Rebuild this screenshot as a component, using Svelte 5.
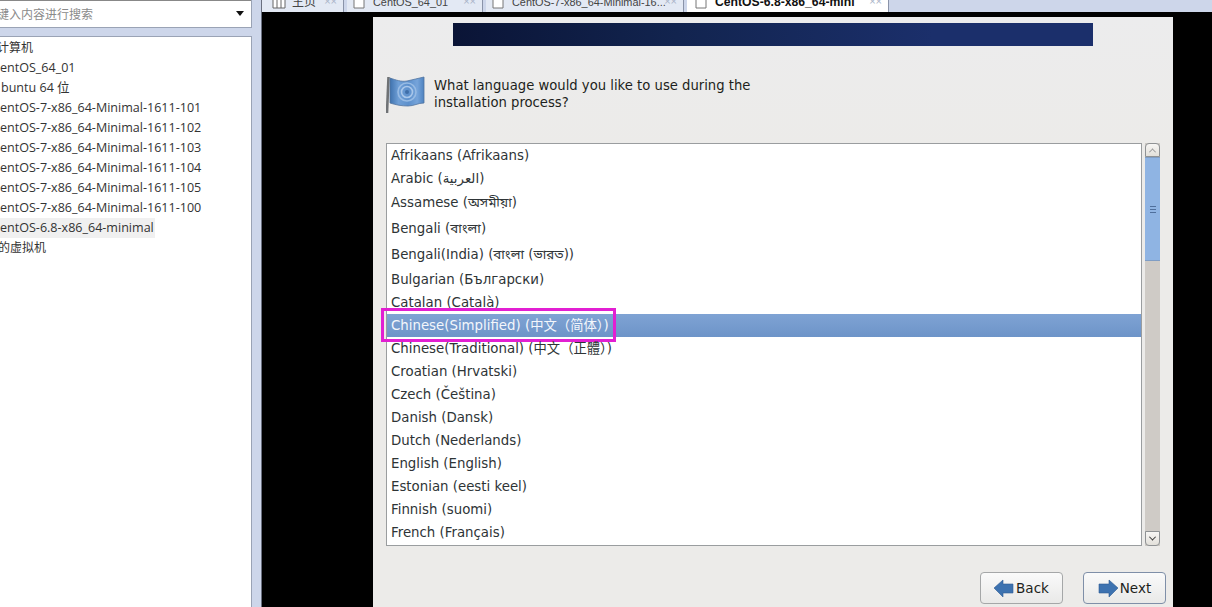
<script>
  const machines = [
    ['计算机', false],
    ['entOS_64_01', false],
    ['buntu 64 位', false],
    ['entOS-7-x86_64-Minimal-1611-101', false],
    ['entOS-7-x86_64-Minimal-1611-102', false],
    ['entOS-7-x86_64-Minimal-1611-103', false],
    ['entOS-7-x86_64-Minimal-1611-104', false],
    ['entOS-7-x86_64-Minimal-1611-105', false],
    ['entOS-7-x86_64-Minimal-1611-100', false],
    ['entOS-6.8-x86_64-minimal', true],
    ['的虚拟机', false]
  ];
  const languages = [
    ['Afrikaans (Afrikaans)', 'r23'],
    ['Arabic (العربية)', 'r23'],
    ['Assamese (অসমীয়া)', 'r24 low1'],
    ['Bengali (বাংলা)', 'r26 low2'],
    ['Bengali(India) (বাংলা (ভারত))', 'r26 low2'],
    ['Bulgarian (Български)', 'r25'],
    ['Catalan (Català)', 'r23'],
    ['Chinese(Simplified) (中文（简体）)', 'r23 cjk selected'],
    ['Chinese(Traditional) (中文（正體）)', 'r23 cjk'],
    ['Croatian (Hrvatski)', 'r23'],
    ['Czech (Čeština)', 'r23'],
    ['Danish (Dansk)', 'r23'],
    ['Dutch (Nederlands)', 'r23'],
    ['English (English)', 'r23'],
    ['Estonian (eesti keel)', 'r23'],
    ['Finnish (suomi)', 'r23'],
    ['French (Français)', 'r23']
  ];
  const tabs = [
    { label: '主页', cls: 'home' },
    { label: 'CentOS_64_01', cls: 'second' },
    { label: 'CentOS-7-x86_64-Minimal-16...', cls: 'third' },
    { label: 'CentOS-6.8-x86_64-mini', cls: 'active' }
  ];
</script>

<div class="root">
  <aside class="side">
    <div class="search">
      <span class="hint">键入内容进行搜索</span>
      <span class="caret"></span>
    </div>
    <ul class="tree">
      {#each machines as [name, current]}
        <li class="machine"><span class:current>{name}</span></li>
      {/each}
    </ul>
  </aside>

  <main class="main">
    <div class="tabs">
      {#each tabs as t}
        <div class="tab {t.cls}">
          <svg class="tabicon" width="16" height="24" viewBox="0 0 16 24" aria-hidden="true">
            {#if t.cls === 'home'}
              <path d="M1 4h12v16H1zM5 4v16M9 4v16" fill="#fff" stroke="#666" />
            {:else}
              <path d="M1 4h10v16H1z" fill="#fff" stroke="#777" />
              <path d="M8 4h6v7" fill="none" stroke="#777" />
              {#if t.cls === 'active'}<path d="M11 1l5 5-5 5z" fill="#3fae2a" />{/if}
            {/if}
          </svg>
          <span class="tablabel">{t.label}</span>
          <span class="close">××</span>
        </div>
      {/each}
    </div>

    <div class="stage">
      <div class="installer">
        <div class="banner"></div>
        <div class="question">
          <svg class="flag" width="40" height="40" viewBox="0 0 40 40" aria-hidden="true">
            <defs>
              <linearGradient id="fl" x1="0" y1="0" x2="1" y2="0">
                <stop offset="0" stop-color="#3f72ae" />
                <stop offset="0.25" stop-color="#6f9fd6" />
                <stop offset="0.55" stop-color="#5d90cc" />
                <stop offset="0.8" stop-color="#76a4da" />
                <stop offset="1" stop-color="#4d82c0" />
              </linearGradient>
            </defs>
            <path d="M2.5 2L1 38" stroke="#6f7275" stroke-width="2.6" />
            <path d="M4 3c6 2 11 4 17 3s11-3 17-4v26c-6 0-10 3-16 3s-12-1-18-3z" fill="url(#fl)" stroke="#52749f" stroke-width="0.8" />
            <circle cx="21" cy="17" r="9" fill="none" stroke="#97bbe4" stroke-width="1.6" />
            <circle cx="21" cy="17" r="5.5" fill="none" stroke="#a9c7ea" stroke-width="1.6" />
            <circle cx="21" cy="17" r="2" fill="#3f6ea8" />
          </svg>
          <p>What language would you like to use during the<br />installation process?</p>
        </div>

        <div class="listrow">
          <div class="list">
            {#each languages as [text, cls]}
              <div class="lang {cls}">
                <span>{text}</span>
                {#if cls.includes('selected')}<span class="highlight"></span>{/if}
              </div>
            {/each}
          </div>
          <div class="scrollbar">
            <div class="sbtn up"><span class="chev"></span></div>
            <div class="thumb"><span class="grip"></span></div>
            <div class="trough"></div>
            <div class="sbtn down"><span class="chev"></span></div>
          </div>
        </div>

        <div class="actions">
          <button class="btn">
            <svg width="20" height="20" viewBox="0 0 20 20" aria-hidden="true">
              <path d="M0 10L9 2v4h10v9H9v4z" fill="#3d72b0" stroke="#2f5c94" stroke-width="0.6" />
            </svg>
            Back
          </button>
          <button class="btn next">
            <svg width="20" height="20" viewBox="0 0 20 20" aria-hidden="true">
              <path d="M20 10L11 2v4H1v9h10v4z" fill="#3d72b0" stroke="#2f5c94" stroke-width="0.6" />
            </svg>
            Next
          </button>
        </div>
      </div>
    </div>
  </main>
</div>

<style>
  :global(body) {
    margin: 0;
    background: #cdd6ea;
  }
  .root {
    display: grid;
    grid-template-columns: 261px 1fr;
    width: 1212px;
    height: 607px;
    overflow: hidden;
    background: #cdd6ea;
  }
  .side {
    display: flex;
    flex-direction: column;
    gap: 8px;
    padding-right: 9px;
    min-width: 0;
    overflow: hidden;
    font-family: "Open Sans", "Noto Sans CJK SC", sans-serif;
    color: #333;
  }
  .search {
    height: 28px;
    box-sizing: border-box;
    display: flex;
    align-items: center;
    justify-content: space-between;
    padding: 0 7px 0 0;
    background: #fff;
    border: solid #9aa3b5;
    border-width: 0 1px 1px 0;
    font-size: 12px;
    color: #8a8a8a;
    box-shadow: inset 0 1px 0 #888;
  }
  .hint {
    margin-left: -3px;
  }
  .caret {
    width: 0;
    height: 0;
    border: 4px solid transparent;
    border-top: 5px solid #111;
    border-bottom: 0;
  }
  .tree {
    flex: 1;
    margin: 0;
    padding: 1px 0 0;
    list-style: none;
    background: #fff;
    border: solid #9aa3b5;
    border-width: 1px 1px 0 0;
    font-size: 12.55px;
  }
  .machine {
    height: 20px;
    line-height: 20px;
    white-space: nowrap;
  }
  .machine span {
    display: inline-block;
    padding-right: 1px;
  }
  .machine .current {
    background: #f0f0f0;
  }
  .machine:nth-child(3) span {
    margin-left: 1px;
  }
  .machine:last-child span {
    margin-left: -2px;
    font-size: 12px;
  }
  .machine:first-child span {
    margin-left: -3px;
    font-size: 12px;
  }
  .main {
    display: flex;
    flex-direction: column;
    min-width: 0;
    border-left: 1px solid #6a7080;
  }
  .tabs {
    height: 12px;
    display: flex;
    align-items: flex-end;
    gap: 3px;
    overflow: hidden;
    background: #cdd6ea;
    font-family: "Liberation Sans", "Noto Sans CJK SC", sans-serif;
    font-size: 10.9px;
    color: #444;
  }
  .tab {
    flex: none;
    height: 24px;
    box-sizing: border-box;
    display: flex;
    align-items: flex-start;
    gap: 2px;
    padding-left: 6px;
    background: #e3e9f4;
    border-right: 1px solid #8a93a8;
    white-space: nowrap;
    position: relative;
  }
  .home { width: 82px; padding-left: 10px; font-size: 12px; }
  .second { width: 136px; }
  .third { width: 198px; }
  .active { width: 202px; padding-left: 8px; background: #fff; font-size: 12.2px; font-weight: 700; color: #111; }
  .tabicon { flex: none; }
  .tablabel { margin-top: 6px; line-height: 16px; margin-left: 2px; }
  .close {
    position: absolute;
    right: 6px;
    top: 6px;
    color: #aab4c8;
    font-size: 11px;
    font-weight: 400;
    line-height: 14px;
  }
  .stage {
    flex: 1;
    min-height: 0;
    background: #000;
    padding: 5px 0 0 111px;
  }
  .installer {
    width: 800px;
    height: 590px;
    box-sizing: border-box;
    padding: 6px 13px 0;
    background: linear-gradient(180deg, #ececed 0, #ecebe9 130px);
    display: flex;
    flex-direction: column;
    font-family: "DejaVu Sans", "Noto Sans Bengali", "Noto Sans CJK SC", sans-serif;
    font-size: 13.33px;
    color: #2e3436;
  }
  .banner {
    align-self: center;
    width: 640px;
    height: 23px;
    background: linear-gradient(90deg, #0a1436 0%, #12244f 35%, #1b2f6b 75%, #1b2f6b 100%);
  }
  .question {
    display: flex;
    gap: 8px;
    align-items: flex-start;
    margin-top: 29px;
    height: 68px;
  }
  .question p {
    margin: 2px 0 0;
    font-size: 13.2px;
    line-height: 17px;
    color: #1d1f20;
    white-space: nowrap;
  }
  .flag {
    flex: none;
  }
  .listrow {
    display: flex;
    gap: 3px;
    height: 403px;
  }
  .list {
    width: 756px;
    box-sizing: border-box;
    background: #fff;
    border: 1px solid #9a9d9f;
    overflow: visible;
  }
  .lang {
    position: relative;
    box-sizing: border-box;
    display: flex;
    align-items: center;
    padding: 0 0 0 4px;
    white-space: nowrap;
  }
  .r23 { height: 23px; }
  .r25 { height: 25px; padding: 1px 0 0 4px; }
  .r24 { height: 24px; }
  .r26 { height: 26px; }
  .low1 { padding: 2px 0 0 4px; }
  .low2 { padding: 4px 0 0 4px; }
  .cjk { padding: 0 0 2px 4px; }
  .selected {
    background: linear-gradient(180deg, #7fa3d4, #6d94c8);
    color: #f3f6fb;
  }
  .highlight {
    position: absolute;
    left: -6px;
    top: -6px;
    width: 235px;
    height: 34px;
    box-sizing: border-box;
    border: 3px solid #e21fd2;
  }
  .scrollbar {
    width: 15px;
    display: flex;
    flex-direction: column;
    background: #cfcbc6;
  }
  .sbtn {
    height: 14px;
    flex: none;
    box-sizing: border-box;
    background: linear-gradient(180deg, #f7f6f4, #e3e0da);
    border: 1px solid #8f9294;
    display: flex;
    align-items: center;
    justify-content: center;
  }
  .up { border-radius: 4px 4px 0 0; }
  .down { border-radius: 0 0 4px 4px; height: 15px; }
  .chev {
    width: 4px;
    height: 4px;
    border: solid #333;
    border-width: 1.5px 0 0 1.5px;
    transform: rotate(45deg) translate(1px, 1px);
  }
  .up .chev { border-color: #999; }
  .down .chev {
    transform: rotate(225deg) translate(1px, 1px);
  }
  .thumb {
    height: 104px;
    flex: none;
    box-sizing: border-box;
    background: #8fb4e3;
    border: solid #7f9dc4;
    border-width: 1px 0;
    display: flex;
    align-items: center;
    justify-content: center;
  }
  .grip {
    width: 6px;
    height: 7px;
    background: repeating-linear-gradient(180deg, #4f6f9c 0 1px, transparent 1px 3px);
  }
  .trough {
    flex: 1;
  }
  .actions {
    display: flex;
    justify-content: flex-end;
    gap: 20px;
    margin: 26px -6px 0 0;
  }
  .btn {
    width: 83px;
    height: 32px;
    display: flex;
    align-items: center;
    justify-content: center;
    gap: 2px;
    padding: 0;
    background: linear-gradient(180deg, #fafafa, #e9e9e8);
    border: 1px solid #a5a7a8;
    border-radius: 4px;
    font: inherit;
    font-size: 13.5px;
    color: #1d1f20;
  }
  .next {
    border-color: #7f8fa8;
  }
</style>
